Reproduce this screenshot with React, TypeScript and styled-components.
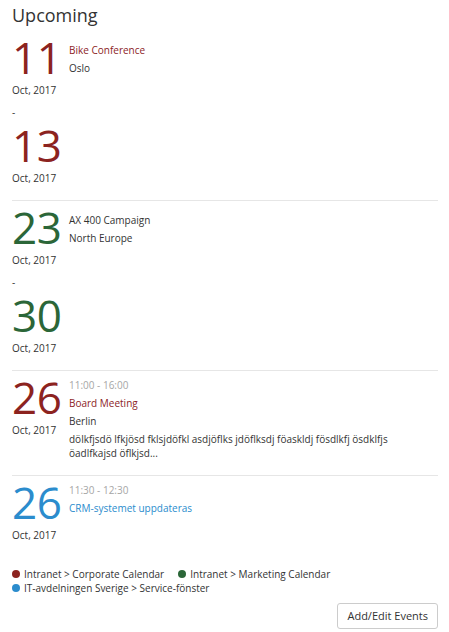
import React from "react";
import styled, { createGlobalStyle } from "styled-components";

const Global = createGlobalStyle`
  html, body { margin: 0; padding: 0; background: #fff; }
  body { font-family: "Open Sans", "Liberation Sans", sans-serif; color: #333; }
`;

const COLORS = {
  red: "#8c231f",
  green: "#2b6638",
  blue: "#2b8ccd",
};

type Cal = keyof typeof COLORS;

const Page = styled.div`
  padding: 4px 11px 4px 12px;
  width: 426px;
`;

const Title = styled.h2`
  margin: 0;
  font-size: 18px;
  font-weight: 400;
  line-height: 22px;
  color: #333;
`;

const List = styled.div`
  display: flex;
  flex-direction: column;
`;

const Row = styled.div<{ $last?: boolean }>`
  display: flex;
  padding: 0 0 15px;
  border-bottom: ${(p) => (p.$last ? "none" : "1px solid #e6e6e6")};
  &:first-child { padding-top: 5px; }
`;

const DateCol = styled.div`
  width: 57px;
  flex: none;
  display: flex;
  flex-direction: column;
`;

const Day = styled.div<{ $c: Cal }>`
  font-size: 44px;
  line-height: 52px;
  color: ${(p) => COLORS[p.$c]};
  letter-spacing: -0.5px;
`;

const Month = styled.div`
  font-size: 10px;
  line-height: 14px;
  color: #333;
`;

const Dash = styled.div`
  font-size: 10px;
  line-height: 14px;
  margin: 8px 0 0;
`;

const Info = styled.div<{ $top: number }>`
  flex: 1;
  padding-top: ${(p) => p.$top}px;
  display: flex;
  flex-direction: column;
  gap: 4px;
  font-size: 10px;
  line-height: 14px;
`;

const Time = styled.div`
  color: #a6a6a6;
`;

const EvTitle = styled.div<{ $c?: string }>`
  color: ${(p) => p.$c || "#333"};
`;

const Text = styled.div`
  color: #333;
`;

const Desc = styled.div`
  color: #333;
  line-height: 14px;
  padding-right: 30px;
`;

const Legend = styled.div`
  display: flex;
  flex-wrap: wrap;
  column-gap: 14px;
  font-size: 10px;
  line-height: 14px;
  margin-top: 10px;
  width: 360px;
`;

const LegendItem = styled.div`
  display: flex;
  align-items: center;
  gap: 4px;
`;

const Dot = styled.span<{ $c: Cal }>`
  width: 8px;
  height: 8px;
  border-radius: 50%;
  background: ${(p) => COLORS[p.$c]};
  display: inline-block;
`;

const Footer = styled.div`
  display: flex;
  justify-content: flex-end;
  margin-top: 8px;
`;

const Button = styled.button`
  font-family: "Open Sans", "Liberation Sans", sans-serif;
  font-size: 11px;
  line-height: 14px;
  color: #333;
  background: #fff;
  border: 1px solid #cccccc;
  border-radius: 3px;
  height: 26px;
  padding: 0 9px;
  cursor: pointer;
`;

type Ev = {
  start: string;
  end?: string;
  cal: Cal;
  time?: string;
  title: string;
  titleColor?: string;
  place?: string;
  desc?: string;
  top: number;
};

const events: Ev[] = [
  { start: "11", end: "13", cal: "red", title: "Bike Conference", titleColor: COLORS.red, place: "Oslo", top: 12 },
  { start: "23", end: "30", cal: "green", title: "AX 400 Campaign", place: "North Europe", top: 12 },
  {
    start: "26",
    cal: "red",
    time: "11:00 - 16:00",
    title: "Board Meeting",
    titleColor: COLORS.red,
    place: "Berlin",
    desc: "dölkfjsdö lfkjösd fklsjdöfkl asdjöflks jdöflksdj föaskldj fösdlkfj ösdklfjs öadlfkajsd öflkjsd...",
    top: 7,
  },
  { start: "26", cal: "blue", time: "11:30 - 12:30", title: "CRM-systemet uppdateras", titleColor: COLORS.blue, top: 7 },
];

export default function App() {
  return (
    <Page>
      <Global />
      <Title>Upcoming</Title>
      <List>
        {events.map((e, i) => (
          <Row key={i} $last={i === events.length - 1}>
            <DateCol>
              <Day $c={e.cal}>{e.start}</Day>
              <Month>Oct, 2017</Month>
              {e.end && (
                <>
                  <Dash>-</Dash>
                  <Day $c={e.cal}>{e.end}</Day>
                  <Month>Oct, 2017</Month>
                </>
              )}
            </DateCol>
            <Info $top={e.top}>
              {e.time && <Time>{e.time}</Time>}
              <EvTitle $c={e.titleColor}>{e.title}</EvTitle>
              {e.place && <Text>{e.place}</Text>}
              {e.desc && <Desc>{e.desc}</Desc>}
            </Info>
          </Row>
        ))}
      </List>
      <Legend>
        <LegendItem><Dot $c="red" />Intranet &gt; Corporate Calendar</LegendItem>
        <LegendItem><Dot $c="green" />Intranet &gt; Marketing Calendar</LegendItem>
        <LegendItem><Dot $c="blue" />IT-avdelningen Sverige &gt; Service-fönster</LegendItem>
      </Legend>
      <Footer>
        <Button>Add/Edit Events</Button>
      </Footer>
    </Page>
  );
}
